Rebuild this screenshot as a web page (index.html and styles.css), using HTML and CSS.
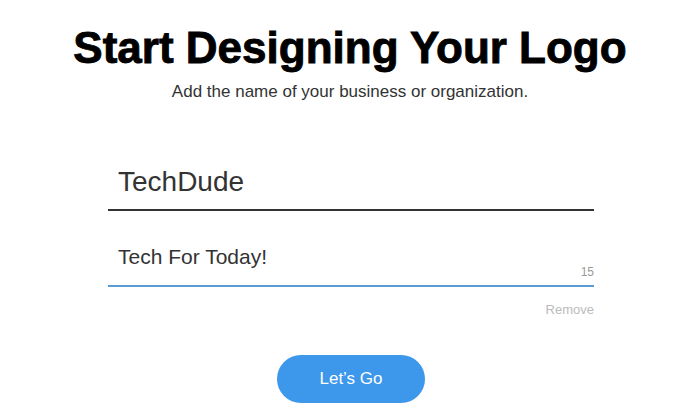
FILE: index.html
```html
<!DOCTYPE HTML>
<html>
<head>
    <meta charset="utf-8">
    <title>Start Designing Your Logo</title>
    <meta name="viewport" content="width=device-width, initial-scale=1">
    <link rel="stylesheet" href="styles.css">
</head>
<body>

<main class="setup">
    <h1 class="setup-title">Start Designing Your Logo</h1>
    <p class="setup-lead">Add the name of your business or organization.</p>

    <form class="setup-form" onsubmit="return false;">
        <div class="field field-name">
            <input type="text" value="TechDude">
        </div>
        <div class="field field-tagline">
            <input type="text" value="Tech For Today!">
            <span class="field-count">15</span>
        </div>
        <div class="field-actions">
            <a href="#" class="field-remove">Remove</a>
        </div>
        <button type="submit" class="go">Let’s Go</button>
    </form>
</main>

</body>
</html>
```

FILE: styles.css
```css
body {
    margin: 0;
    background: #fff;
    font-family: "Liberation Sans", Arial, sans-serif;
    color: #333;
}
.setup {
    text-align: center;
    padding-top: 22px;
}
.setup-title {
    margin: 0;
    font-size: 44px;
    line-height: 52px;
    font-weight: 700;
    color: #000;
    -webkit-text-stroke: 0.9px #000;
}
.setup-lead {
    margin: 8px 0 0;
    font-size: 17px;
    line-height: 20px;
    color: #333;
}
.setup-form {
    width: 486px;
    margin: 52px 0 0 calc(50% - 242px);
    display: flex;
    flex-direction: column;
}
.field {
    display: flex;
    align-items: flex-end;
}
.field input {
    flex: 1;
    min-width: 0;
    border: 0;
    outline: 0;
    margin: 0;
    padding: 0 0 0 10px;
    background: transparent;
    font-family: inherit;
    color: #333;
}
.field-name {
    border-bottom: 2px solid #333;
}
.field-name input {
    height: 55px;
    font-size: 28px;
}
.field-tagline {
    margin-top: 18px;
    border-bottom: 2px solid #5b9bd5;
}
.field-tagline input {
    height: 56px;
    font-size: 21px;
}
.field-count {
    font-size: 12px;
    line-height: 12px;
    padding-bottom: 7px;
    color: #999;
}
.field-actions {
    margin-top: 15px;
    text-align: right;
    font-size: 13px;
    line-height: 16px;
}
.field-remove {
    color: #bbb;
    text-decoration: none;
}
.go {
    align-self: center;
    margin-top: 37px;
    width: 148px;
    height: 48px;
    border: 0;
    border-radius: 24px;
    background: #3d97ea;
    color: #fff;
    font-family: inherit;
    font-size: 17px;
    cursor: pointer;
}
```
